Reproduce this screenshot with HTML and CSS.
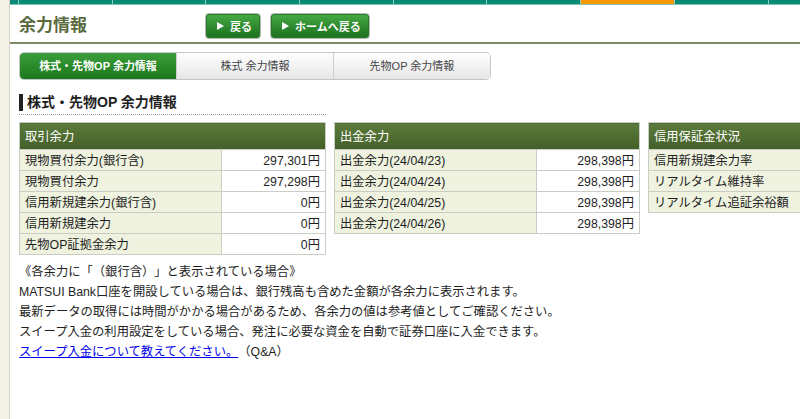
FILE: index.html
```html
<!DOCTYPE html>
<html lang="ja">
<head>
    <meta charset="UTF-8">
    <meta name="viewport" content="width=device-width, initial-scale=1.0">
    <title>余力情報</title>
    <link rel="stylesheet" href="styles.css">
</head>
<body>

    <div class="side"></div>

    <div class="main">
        <!-- Global menu bar -->
        <ul class="topnav">
            <li class="edge"></li>
            <li></li>
            <li></li>
            <li></li>
            <li></li>
            <li></li>
            <li></li>
            <li class="current"></li>
            <li></li>
            <li></li>
        </ul>

        <!-- Page title -->
        <div class="title-row">
            <h1>余力情報</h1>
            <a class="btn" href="#"><span class="arrow"></span>戻る</a>
            <a class="btn" href="#"><span class="arrow"></span>ホームへ戻る</a>
        </div>

        <!-- Tabs -->
        <div class="tabs">
            <a class="tab active" href="#">株式・先物OP 余力情報</a>
            <a class="tab" href="#">株式 余力情報</a>
            <a class="tab" href="#">先物OP 余力情報</a>
        </div>

        <h2 class="section-title"><span>株式・先物OP 余力情報</span></h2>

        <!-- Panels -->
        <div class="panels">
            <table class="panel">
                <tr><th colspan="2">取引余力</th></tr>
                <tr><td class="label">現物買付余力(銀行含)</td><td class="value">297,301円</td></tr>
                <tr><td class="label">現物買付余力</td><td class="value">297,298円</td></tr>
                <tr><td class="label">信用新規建余力(銀行含)</td><td class="value">0円</td></tr>
                <tr><td class="label">信用新規建余力</td><td class="value">0円</td></tr>
                <tr><td class="label">先物OP証拠金余力</td><td class="value">0円</td></tr>
            </table>

            <table class="panel">
                <tr><th colspan="2">出金余力</th></tr>
                <tr><td class="label">出金余力(24/04/23)</td><td class="value">298,398円</td></tr>
                <tr><td class="label">出金余力(24/04/24)</td><td class="value">298,398円</td></tr>
                <tr><td class="label">出金余力(24/04/25)</td><td class="value">298,398円</td></tr>
                <tr><td class="label">出金余力(24/04/26)</td><td class="value">298,398円</td></tr>
            </table>

            <table class="panel">
                <tr><th colspan="2">信用保証金状況</th></tr>
                <tr><td class="label">信用新規建余力率</td><td class="value"></td></tr>
                <tr><td class="label">リアルタイム維持率</td><td class="value"></td></tr>
                <tr><td class="label">リアルタイム追証余裕額</td><td class="value"></td></tr>
            </table>
        </div>

        <!-- Notes -->
        <div class="notes">
            <p>《各余力に「（銀行含）」と表示されている場合》</p>
            <p>MATSUI Bank口座を開設している場合は、銀行残高も含めた金額が各余力に表示されます。</p>
            <p>最新データの取得には時間がかかる場合があるため、各余力の値は参考値としてご確認ください。</p>
            <p>スイープ入金の利用設定をしている場合、発注に必要な資金を自動で証券口座に入金できます。</p>
            <p><a href="#">スイープ入金について教えてください。</a>（Q&amp;A）</p>
        </div>
    </div>

</body>
</html>
```

FILE: styles.css
```css
html, body {
    height: 100%;
    overflow: hidden;
}

body {
    margin: 0;
    display: flex;
    font-family: "Liberation Sans", "Noto Sans CJK JP", sans-serif;
    font-size: 12.3px;
    color: #1e1e1e;
    background-color: #fff;
    text-spacing-trim: space-all;
}

.side {
    flex: 0 0 9px;
    background-color: #f3f0e8;
    border-right: 1px solid #d6d2c8;
}

.main {
    flex: 1;
    min-width: 0;
}

/* top menu bar */
.topnav {
    display: flex;
    margin: 0;
    padding: 0;
    list-style: none;
    height: 4px;
    background-color: #0b8a76;
    border-bottom: 1px solid #7cc6b8;
}

.topnav li {
    flex: 0 0 93.7px;
    border-left: 1px solid #8ccfc2;
    box-sizing: border-box;
}

.topnav li.edge {
    flex: 0 0 8px;
    border-left: none;
}

.topnav li.current {
    background-color: #f79a06;
}

/* title */
.title-row {
    display: flex;
    align-items: center;
    padding: 8px 0 3px 9px;
    border-bottom: 2px solid #7d8c66;
}

.title-row h1 {
    width: 186px;
    margin: 0;
    font-size: 17px;
    line-height: 26px;
    color: #5a6b3e;
}

.btn {
    display: flex;
    align-items: center;
    height: 26px;
    box-sizing: border-box;
    padding: 0 8px 0 11px;
    margin-right: 9px;
    border: 1px solid #b4b8b4;
    border-radius: 4px;
    box-shadow: inset 0 0 0 1px #2b7a2b;
    background: linear-gradient(#46ab46, #1b6f1c);
    color: #fff;
    font-size: 11px;
    font-weight: bold;
    text-decoration: none;
}

.arrow {
    width: 0;
    height: 0;
    margin-right: 6px;
    border-top: 4px solid transparent;
    border-bottom: 4px solid transparent;
    border-left: 7px solid #fff;
}

/* tabs */
.tabs {
    display: flex;
    width: 472px;
    height: 28px;
    box-sizing: border-box;
    margin: 8px 0 0 9px;
    border: 1px solid #c6c6c6;
    border-radius: 5px;
    overflow: hidden;
}

.tab {
    flex: 1;
    text-align: center;
    line-height: 26px;
    font-size: 11px;
    color: #444;
    text-decoration: none;
    background: linear-gradient(#ffffff, #e6e6e6);
    border-left: 1px solid #cfcfcf;
}

.tab.active {
    border-left: none;
    background: linear-gradient(#3a9d3a, #1c781c);
    color: #fff;
    font-weight: bold;
}

/* section heading */
.section-title {
    width: 307px;
    margin: 14px 0 0 9px;
    padding-bottom: 3px;
    font-size: 14px;
    line-height: 17px;
    border-bottom: 1px dotted #999;
}

.section-title span {
    display: block;
    border-left: 4px solid #222;
    padding-left: 4px;
}

/* panels */
.panels {
    display: flex;
    align-items: flex-start;
    gap: 8px;
    margin: 7px 0 0 9px;
}

.panel {
    flex: 0 0 307px;
    border-collapse: collapse;
    border: 1px solid #c9cdc4;
}

.panel:nth-child(2) {
    flex-basis: 306px;
}

.panel th {
    height: 26px;
    padding: 0 5px;
    text-align: left;
    font-weight: normal;
    color: #fff;
    background: linear-gradient(#5b7b3b, #445f29);
    border: 1px solid #c9cdc4;
}

.panel td {
    height: 20px;
    padding: 0 5px;
    border: 1px solid #c9cdc4;
}

.panel .label {
    width: 191px;
    background-color: #eef2de;
}

.panel .value {
    text-align: right;
    background-color: #fff;
}

/* notes */
.notes {
    margin: 7px 0 0 9px;
}

.notes p {
    margin: 0;
    line-height: 20px;
}

.notes a {
    color: #0000ee;
}
```
